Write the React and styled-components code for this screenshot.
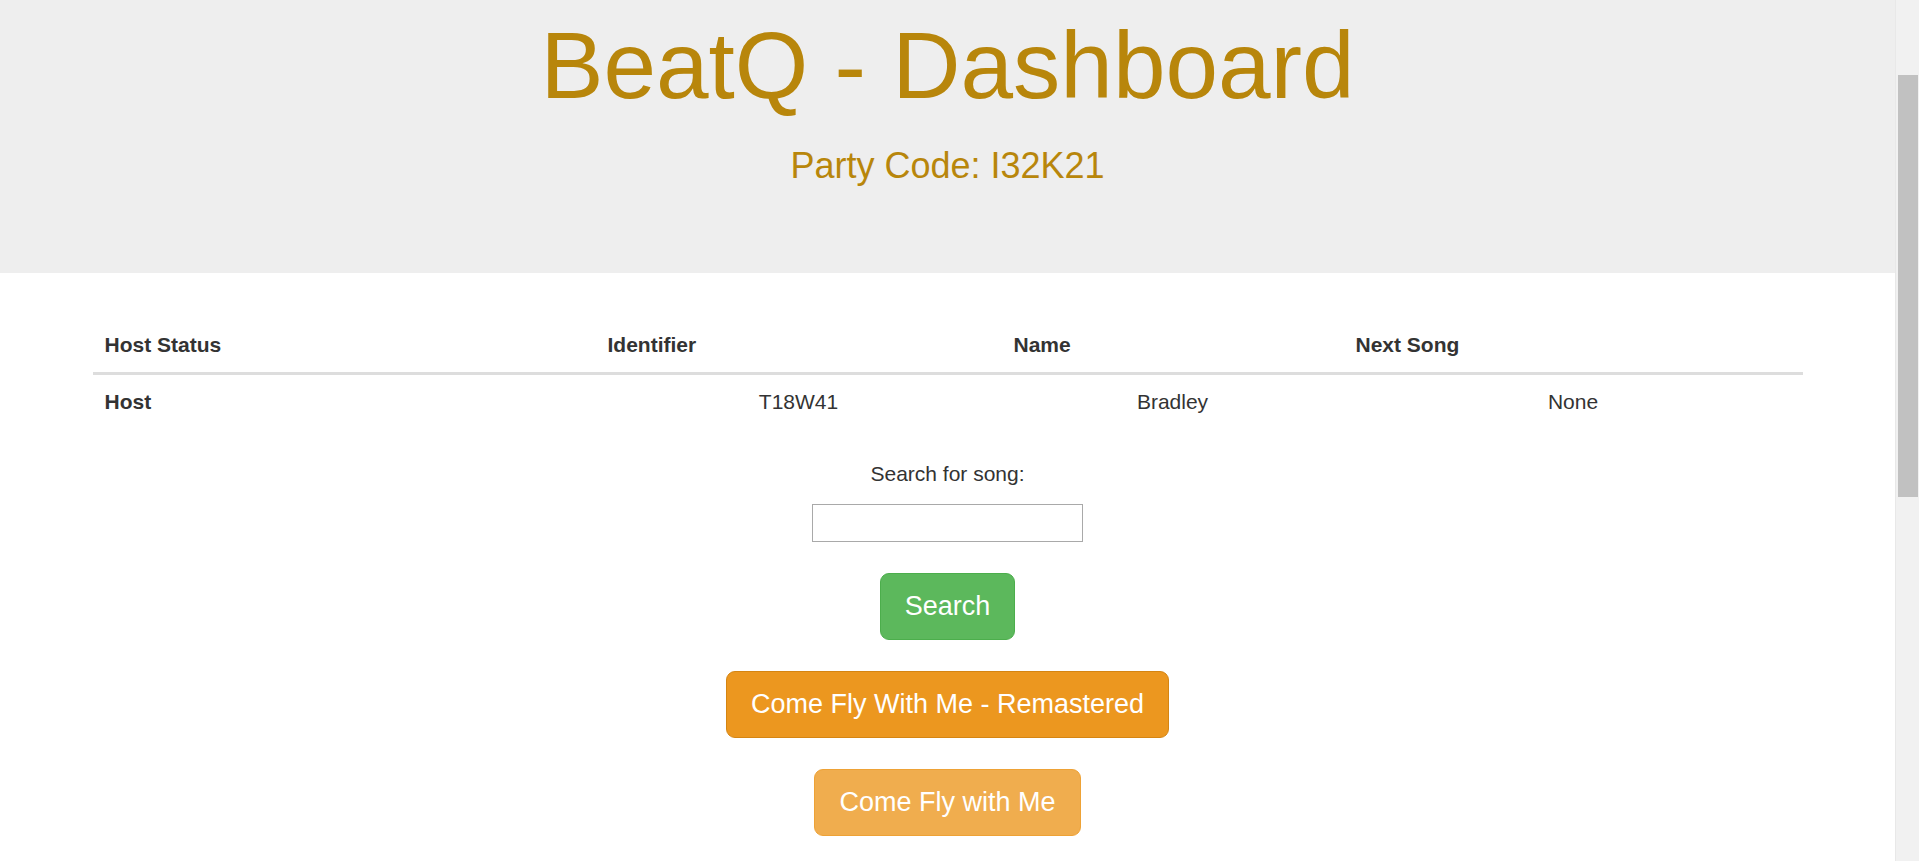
import React from "react";
import styled, { createGlobalStyle } from "styled-components";

const SCROLLBAR_WIDTH = 24;

const GlobalStyle = createGlobalStyle`
  html, body {
    overflow: hidden;
  }
  body {
    margin: 0;
    font-family: "Liberation Sans", Arial, Helvetica, sans-serif;
    font-size: 21px;
    line-height: 30px;
    color: #333333;
    background: #ffffff;
  }
  * {
    box-sizing: border-box;
  }
`;

const Page = styled.div`
  margin-right: ${SCROLLBAR_WIDTH}px;
`;

const Scrollbar = styled.aside`
  position: fixed;
  top: 0;
  right: 0;
  width: ${SCROLLBAR_WIDTH}px;
  height: 100vh;
  background: #f1f1f1;
  border-left: 1px solid #e8e8e8;
`;

const ScrollThumb = styled.div`
  position: absolute;
  left: 2px;
  right: 1px;
  background: #c1c1c1;
`;

const Jumbotron = styled.header`
  background: #eeeeee;
  padding: 13px 0 87px;
  text-align: center;
`;

const Title = styled.h1`
  margin: 0;
  font-size: 94.5px;
  line-height: 104px;
  font-weight: 400;
  color: #b8860b;
`;

const PartyCode = styled.h3`
  margin: 29px 0 0;
  font-size: 36px;
  line-height: 39.6px;
  font-weight: 400;
  color: #b8860b;
`;

const Container = styled.main`
  width: 1710px;
  margin: 45px auto 0;
`;

const Table = styled.table`
  width: 100%;
  border-collapse: collapse;
  table-layout: fixed;
`;

const Col = styled.col`
  width: ${(p) => p.$w}px;
`;

const HeadCell = styled.th`
  padding: 12px;
  line-height: 30px;
  text-align: left;
  font-weight: 700;
  border-bottom: 3px solid #dddddd;
`;

const RowHead = styled.th`
  padding: 12px;
  line-height: 30px;
  text-align: left;
  font-weight: 700;
`;

const Cell = styled.td`
  padding: 12px;
  line-height: 30px;
  text-align: center;
`;

const SearchArea = styled.section`
  display: flex;
  flex-direction: column;
  align-items: center;
  margin-top: 30px;
`;

const Label = styled.label`
  display: block;
  line-height: 30px;
`;

const Input = styled.input`
  margin-top: 15px;
  width: 271px;
  height: 38px;
  border: 1px solid #a9a9a9;
  padding: 1px 2px;
  font-family: inherit;
  font-size: 21px;
  outline: none;
`;

const variants = {
  success: { bg: "#5cb85c", border: "#4cae4c" },
  warningActive: { bg: "#ec971f", border: "#d58512" },
  warning: { bg: "#f0ad4e", border: "#eea236" },
};

const Button = styled.button`
  margin-top: 31px;
  padding: 14.5px 24px;
  font-family: inherit;
  font-size: 27px;
  line-height: 36px;
  color: #ffffff;
  background: ${(p) => variants[p.$variant].bg};
  border: 1px solid ${(p) => variants[p.$variant].border};
  border-radius: 9px;
  cursor: pointer;
`;

export default function App() {
  return (
    <>
      <GlobalStyle />
      <Page>
        <Jumbotron>
          <Title>BeatQ - Dashboard</Title>
          <PartyCode>Party Code: I32K21</PartyCode>
        </Jumbotron>
        <Container>
          <Table>
            <colgroup>
              <Col $w={503} />
              <Col $w={406} />
              <Col $w={342} />
              <Col $w={459} />
            </colgroup>
            <thead>
              <tr>
                <HeadCell>Host Status</HeadCell>
                <HeadCell>Identifier</HeadCell>
                <HeadCell>Name</HeadCell>
                <HeadCell>Next Song</HeadCell>
              </tr>
            </thead>
            <tbody>
              <tr>
                <RowHead>Host</RowHead>
                <Cell>T18W41</Cell>
                <Cell>Bradley</Cell>
                <Cell>None</Cell>
              </tr>
            </tbody>
          </Table>
          <SearchArea>
            <Label htmlFor="song">Search for song:</Label>
            <Input id="song" type="text" />
            <Button $variant="success">Search</Button>
            <Button $variant="warningActive">Come Fly With Me - Remastered</Button>
            <Button $variant="warning">Come Fly with Me</Button>
          </SearchArea>
        </Container>
      </Page>
      <Scrollbar aria-hidden="true">
        <ScrollThumb style={{ top: 75, height: 422 }} />
      </Scrollbar>
    </>
  );
}
